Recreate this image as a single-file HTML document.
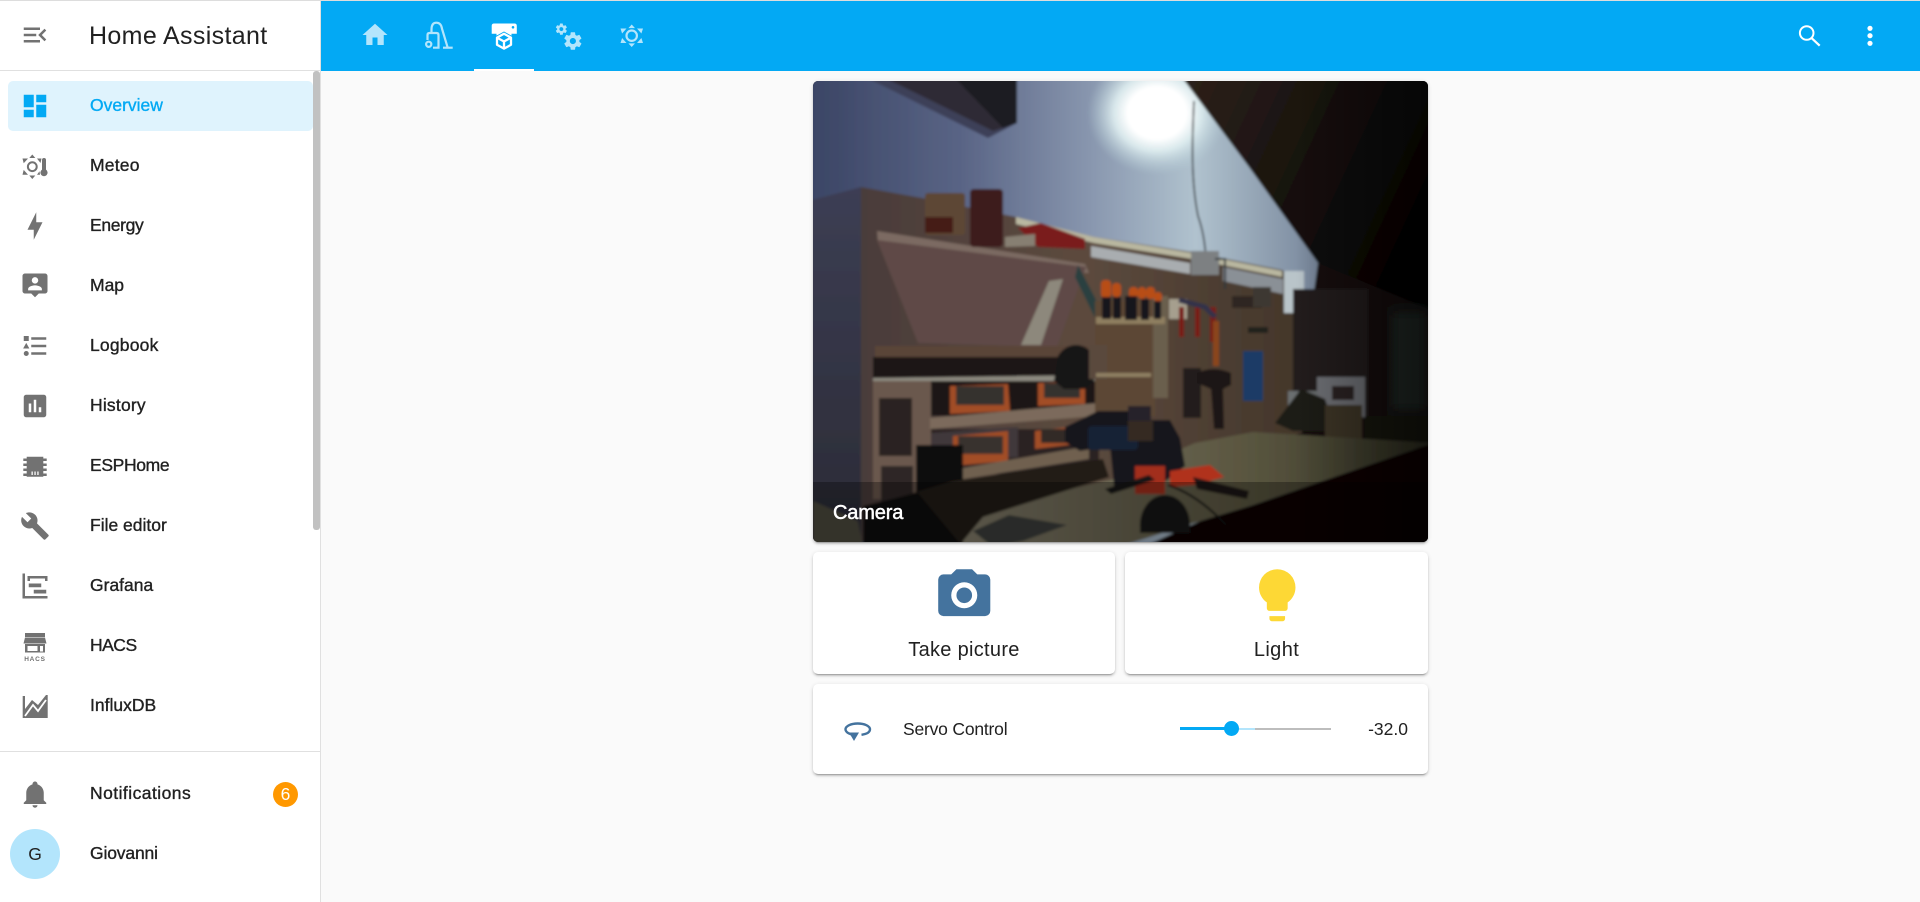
<!DOCTYPE html>
<html><head><meta charset="utf-8"><title>Home Assistant</title>
<style>
*{box-sizing:border-box}
html,body{margin:0;padding:0;width:1920px;height:902px;overflow:hidden;background:#fafafa;font-family:"Liberation Sans",Arial,sans-serif;color:#212121}
.abs,svg.i,.t{position:absolute}
svg.i{width:30px;height:30px;fill:#727272;left:20px}
.t{left:90px;font-size:17.5px;line-height:24px;height:24px;-webkit-text-stroke:.35px currentColor;white-space:nowrap}
.card{position:absolute;background:#fff;border-radius:5px;box-shadow:0 2px 2px rgba(0,0,0,.14),0 1px 5px rgba(0,0,0,.12),0 3px 1px -2px rgba(0,0,0,.2)}
.top svg{position:absolute}
</style></head><body>
<div class="abs" style="left:0;top:0;width:1920px;height:1px;background:#ddd;z-index:5"></div>
<div class="abs" style="left:321px;top:1px;width:1599px;height:70px;background:#03a9f4"></div>

<!-- sidebar -->
<div class="abs" style="left:0;top:0;width:321px;height:902px;background:#fff;border-right:1px solid #e0e0e0"></div>
<div class="abs" style="left:0;top:70px;width:320px;height:1px;background:#e0e0e0"></div>
<div class="abs" style="left:0;top:751px;width:320px;height:1px;background:#e0e0e0"></div>
<div class="abs" style="left:313px;top:71px;width:7px;height:459px;background:#c1c1c1;border-radius:3px"></div>
<div class="abs" style="left:8px;top:81px;width:305px;height:50px;border-radius:5px;background:#dff3fd"></div>

<svg class="i" style="top:19.5px" viewBox="0 0 24 24"><path d="M21,15.61L19.59,17L14.58,12L19.59,7L21,8.39L17.44,12L21,15.61M3,6H16V8H3V6M3,13V11H13V13H3M3,18V16H16V18H3Z"/></svg>
<div class="abs" style="left:89px;top:20px;font-size:25px;line-height:32px;color:#212121;white-space:nowrap;letter-spacing:.35px">Home Assistant</div>

<svg class="i" style="top:91px;fill:#03a9f4" viewBox="0 0 24 24"><path d="M13,3V9H21V3M13,21H21V11H13M3,21H11V15H3M3,13H11V3H3V13Z"/></svg>
<div class="t" style="top:93px;color:#03a9f4">Overview</div>

<svg class="i" style="top:151px" viewBox="0 0 30 30"><circle cx="12.3" cy="15.700" r="4.400" fill="none" stroke="#727272" stroke-width="2"/><path d="M12.300 3.500l3 3.500h-6zM12.300 28l-3-3.500h6zM2.500 7.500h5.500l-4.300 4.800zM21.500 7.500h-4.500l3.500 4.500zM2.500 23.700h5.500l-4.300-4.800zM20 23.700h-3l2.500-3.500z"/><path d="M22 9a2 2 0 0 1 4 0v9.600a3.600 3.600 0 1 1-4 0z"/></svg>
<div class="t" style="top:153px;letter-spacing:.2px">Meteo</div>

<svg class="i" style="top:211px" viewBox="0 0 24 24"><path d="M11 15H6L13 1V9H18L11 23V15Z"/></svg>
<div class="t" style="top:213px;letter-spacing:-.35px">Energy</div>

<svg class="i" style="top:271px" viewBox="0 0 24 24"><path fill-rule="evenodd" d="M20 2H4C2.900 2 2 2.900 2 4V16C2 17.100 2.900 18 4 18H9L12 21L15 18H20C21.100 18 22 17.100 22 16V4C22 2.900 21.100 2 20 2ZM12 4.900A2.600 2.600 0 1 1 12 10.100A2.600 2.600 0 1 1 12 4.900ZM17.500 15.500H6.500V14.300C6.500 12.500 10 11.500 12 11.500C14 11.500 17.500 12.500 17.500 14.300Z"/></svg>
<div class="t" style="top:273px">Map</div>

<svg class="i" style="top:331px" viewBox="0 0 24 24"><path d="M5,9.5L7.5,14H2.5L5,9.5M3,4H7V8H3V4M5,20A2,2 0 0,0 7,18A2,2 0 0,0 5,16A2,2 0 0,0 3,18A2,2 0 0,0 5,20M9,5V7H21V5H9M9,19H21V17H9V19M9,13H21V11H9V13Z"/></svg>
<div class="t" style="top:333px;letter-spacing:.2px">Logbook</div>

<svg class="i" style="top:391px" viewBox="0 0 24 24"><path fill-rule="evenodd" d="M9 17H7V10H9V17M13 17H11V7H13V17M17 17H15V13H17V17M19 3H5C3.9 3 3 3.9 3 5V19C3 20.1 3.9 21 5 21H19C20.1 21 21 20.1 21 19V5C21 3.9 20.1 3 19 3Z"/></svg>
<div class="t" style="top:393px;letter-spacing:.2px">History</div>

<svg class="i" style="top:451px" viewBox="0 0 30 30"><path fill-rule="evenodd" d="M6.700 5.700h16.600v20h-16.600zM11.500 20.500h1.300v3.500h-1.300zM14.400 20.500h1.300v3.500h-1.300zM17.300 20.500h1.300v3.500h-1.300z"/><path d="M3.300 7.500h4v2.500h-4zM3.300 12.500h4v2.500h-4zM3.300 17.500h4v2.500h-4zM3.300 22.500h4v2.500h-4zM22.700 7.500h4v2.500h-4zM22.700 12.500h4v2.500h-4zM22.700 17.500h4v2.500h-4zM22.700 22.500h4v2.500h-4z"/></svg>
<div class="t" style="top:453px;letter-spacing:-.35px">ESPHome</div>

<svg class="i" style="top:511px" viewBox="0 0 24 24"><path d="M22.7,19L13.6,9.9C14.5,7.6 14,4.9 12.1,3C10.1,1 7.1,0.6 4.7,1.7L9,6L6,9L1.6,4.7C0.4,7.1 0.9,10.1 2.9,12.1C4.8,14 7.5,14.5 9.8,13.6L18.9,22.7C19.3,23.1 19.9,23.1 20.3,22.7L22.6,20.4C23.1,20 23.1,19.3 22.7,19Z"/></svg>
<div class="t" style="top:513px;letter-spacing:0">File editor</div>

<svg class="i" style="top:571px" viewBox="0 0 24 24"><path d="M2,2H4V20H22V22H2V2M7,10H17V13H7V10M11,15H21V18H11V15M6,4H22V8H20V6H8V8H6V4Z"/></svg>
<div class="t" style="top:573px">Grafana</div>

<svg class="i" style="top:631px;height:34px" viewBox="0 0 30 34"><path fill-rule="evenodd" d="M5 2h20v4H5zM5 6.500h20l1.500 6H3.500zM5 13h20v8.500H5zM7.500 15v5h10v-5zM20 15v5.500h3V15z"/><text x="15" y="30" text-anchor="middle" font-family="Liberation Sans" font-size="6.500" font-weight="700" letter-spacing=".8" fill="#727272">HACS</text></svg>
<div class="t" style="top:633px;letter-spacing:-.5px">HACS</div>

<svg class="i" style="top:691px" viewBox="0 0 30 30"><path d="M2.700 5H5V18L12 9l6 5L26 4h1.700V27H2.700z"/><path d="M5 25L13 14l5 6L26 9" fill="none" stroke="#fff" stroke-width="1.800"/></svg>
<div class="t" style="top:693px">InfluxDB</div>

<svg class="i" style="top:779px" viewBox="0 0 24 24"><path d="M21,19V20H3V19L5,17V11C5,7.9 7.03,5.17 10,4.29C10,4.19 10,4.1 10,4A2,2 0 0,1 12,2A2,2 0 0,1 14,4C14,4.1 14,4.19 14,4.29C16.97,5.17 19,7.9 19,11V17L21,19M14,21A2,2 0 0,1 12,23A2,2 0 0,1 10,21"/></svg>
<div class="t" style="top:781px;letter-spacing:.45px">Notifications</div>
<div class="abs" style="left:273px;top:782px;width:25px;height:25px;border-radius:50%;background:#ff9800;color:#fff;font-size:17.5px;line-height:25px;text-align:center">6</div>

<div class="abs" style="left:10px;top:829px;width:50px;height:50px;border-radius:50%;background:#b3e5fc;color:#212121;font-size:17.5px;line-height:50px;text-align:center">G</div>
<div class="t" style="top:841px;letter-spacing:-.15px">Giovanni</div>

<!-- top bar -->
<div class="top">
<svg style="left:360px;top:20px;width:30px;height:30px;fill:#b3e5fc" viewBox="0 0 24 24"><path d="M10,20V14H14V20H19V12H22L12,3L2,12H5V20H10Z"/></svg>
<svg style="left:420px;top:15px;width:40px;height:40px;fill:none;stroke:#b3e5fc;stroke-width:2.200" viewBox="420 15 40 40"><circle cx="428.700" cy="44.300" r="2.600"/><path d="M427.500 40v-5q0-2 2-2h7q2 0 2 2v12.700h-5.500"/><path d="M431.500 33v-3.500q0-6.800 4.800-6.800t5.700 6l5.700 19"/><path d="M443 47.700h9.700"/></svg>
<svg style="left:485px;top:15px;width:40px;height:40px" viewBox="485 15 40 40"><path fill="#fff" fill-rule="evenodd" d="M494 23.500h20.500q2.300 0 2.300 2.300v8h-5.300v5h-15v-5h-4.800v-8q0-2.300 2.300-2.300zM513 26a1.300 1.300 0 1 0 .01 0z"/><path fill="#03a9f4" d="M504 31.500l9.500 5.200v9l-9.500 5.300-9.500-5.300v-9z"/><path fill="none" stroke="#fff" stroke-width="2.300" stroke-linejoin="round" d="M504 33.800l7 3.800v7.200l-7 3.800-7-3.800v-7.200zM497 37.600l7 3.900 7-3.900M504 41.500v7"/></svg>
<svg style="left:553px;top:21px;width:30px;height:30px;fill:#b3e5fc" viewBox="0 0 24 24"><path d="M15.9,18.45C17.25,18.45 18.35,17.35 18.35,16C18.35,14.65 17.25,13.55 15.9,13.55C14.54,13.55 13.45,14.65 13.45,16C13.45,17.35 14.54,18.45 15.9,18.45M21.1,16.68L22.58,17.84C22.71,17.95 22.75,18.13 22.66,18.29L21.26,20.71C21.17,20.86 21,20.92 20.83,20.86L19.09,20.16C18.73,20.44 18.34,20.67 17.92,20.85L17.65,22.7C17.62,22.87 17.47,23 17.3,23H14.5C14.32,23 14.18,22.87 14.15,22.7L13.89,20.85C13.46,20.67 13.07,20.44 12.71,20.16L10.96,20.86C10.81,20.92 10.62,20.86 10.54,20.71L9.14,18.29C9.05,18.13 9.09,17.95 9.22,17.84L10.7,16.68L10.65,16L10.7,15.31L9.22,14.16C9.09,14.05 9.05,13.86 9.14,13.71L10.54,11.29C10.62,11.13 10.81,11.07 10.96,11.13L12.71,11.84C13.07,11.56 13.46,11.32 13.89,11.15L14.15,9.29C14.18,9.13 14.32,9 14.5,9H17.3C17.47,9 17.62,9.13 17.65,9.29L17.92,11.15C18.34,11.32 18.73,11.56 19.09,11.84L20.83,11.13C21,11.07 21.17,11.13 21.26,11.29L22.66,13.71C22.75,13.86 22.71,14.05 22.58,14.16L21.1,15.31L21.15,16L21.1,16.68M6.69,8.07C7.56,8.07 8.26,7.37 8.26,6.5C8.26,5.63 7.56,4.92 6.69,4.92A1.58,1.58 0 0,0 5.11,6.5C5.11,7.37 5.82,8.07 6.69,8.07M10.03,6.94L11,7.68C11.07,7.75 11.09,7.87 11.03,7.97L10.13,9.53C10.08,9.63 9.96,9.67 9.86,9.63L8.74,9.18L8,9.62L7.81,10.81C7.79,10.92 7.7,11 7.59,11H5.79C5.67,11 5.58,10.92 5.56,10.81L5.4,9.62L4.64,9.18L3.5,9.63C3.41,9.67 3.3,9.63 3.24,9.53L2.34,7.97C2.28,7.87 2.31,7.75 2.39,7.68L3.34,6.94L3.31,6.5L3.34,6.06L2.39,5.32C2.31,5.25 2.28,5.13 2.34,5.03L3.24,3.47C3.3,3.37 3.41,3.33 3.5,3.37L4.63,3.82L5.4,3.38L5.56,2.19C5.58,2.08 5.67,2 5.79,2H7.59C7.7,2 7.79,2.08 7.81,2.19L8,3.38L8.74,3.82L9.86,3.37C9.96,3.33 10.08,3.37 10.13,3.47L11.03,5.03C11.09,5.13 11.07,5.25 11,5.32L10.03,6.06L10.05,6.5L10.03,6.94Z"/></svg>
<svg style="left:617px;top:21px;width:30px;height:30px;fill:#b3e5fc" viewBox="0 0 30 30"><circle cx="14.700" cy="14.700" r="5.200" fill="none" stroke="#b3e5fc" stroke-width="2.200"/><path d="M14.700 3.500l3.300 3.600h-6.600zM14.700 26l-3.300-3.600h6.600zM3.500 7.500h6l-4.400 5zM26 7.500h-6l4.400 5zM3.500 22h6l-4.400-5zM26 22h-6l4.400-5z"/></svg>
</div>
<div class="abs" style="left:474px;top:69px;width:60px;height:2px;background:#fff"></div>
<svg class="abs" style="left:1790px;top:15px;width:40px;height:40px;fill:none;stroke:#fff;stroke-width:2" viewBox="1790 15 40 40"><circle cx="1806.700" cy="33" r="6.800"/><path d="M1811.700 38.200l8 7.500" stroke-width="2.200"/></svg>
<svg class="abs" style="left:1860px;top:20px;width:20px;height:32px;fill:#fff" viewBox="1860 20 20 32"><circle cx="1870" cy="28.300" r="2.600"/><circle cx="1870" cy="35.700" r="2.600"/><circle cx="1870" cy="43.300" r="2.600"/></svg>

<!-- camera card -->
<div class="card" style="left:813px;top:81px;width:615px;height:461px;overflow:hidden;background:#000">
<svg width="615" height="461" viewBox="0 0 615 461" style="display:block">
<defs>
<linearGradient id="wall" x1="0" x2="1" y1="0" y2="0"><stop offset="0" stop-color="#3a4464"/><stop offset=".25" stop-color="#5a6586"/><stop offset=".45" stop-color="#8896ae"/><stop offset=".62" stop-color="#b0c2ce"/><stop offset=".8" stop-color="#7d8ca0"/><stop offset="1" stop-color="#3c4450"/></linearGradient>
<radialGradient id="glow" cx=".5" cy=".5" r=".5"><stop offset="0" stop-color="#fff"/><stop offset=".42" stop-color="#fff"/><stop offset=".62" stop-color="#dfeef0" stop-opacity=".9"/><stop offset="1" stop-color="#b8d0d8" stop-opacity="0"/></radialGradient>
<linearGradient id="ceil" x1="0" x2="1" y1="0" y2=".45"><stop offset="0" stop-color="#2e221b"/><stop offset=".45" stop-color="#1b1410"/><stop offset="1" stop-color="#050303"/></linearGradient>
<linearGradient id="wood" x1="0" x2="1" y1="0" y2="0"><stop offset="0" stop-color="#4a3c3a"/><stop offset=".5" stop-color="#5c4a3e"/><stop offset="1" stop-color="#43362a"/></linearGradient>
<linearGradient id="lw" x1="0" x2="0" y1="0" y2="1"><stop offset="0" stop-color="#3c3e54"/><stop offset="1" stop-color="#2a2a34"/></linearGradient>
<linearGradient id="bench" x1="0" x2="1" y1="0" y2="0"><stop offset="0" stop-color="#807a68"/><stop offset=".6" stop-color="#5a5640"/><stop offset="1" stop-color="#333324"/></linearGradient>
<linearGradient id="shade" x1="0" x2="1" y1="0" y2="0"><stop offset=".78" stop-color="#000" stop-opacity="0"/><stop offset="1" stop-color="#000" stop-opacity=".55"/></linearGradient>
<filter id="b" x="-5%" y="-5%" width="110%" height="110%"><feGaussianBlur stdDeviation="1.200"/></filter>
<filter id="b3"><feGaussianBlur stdDeviation="6"/></filter>
</defs>
<g filter="url(#b)">
<rect x="-5" y="-5" width="625" height="471" fill="url(#wall)"/>
<ellipse cx="344" cy="32" rx="70" ry="62" fill="url(#glow)"/>
<polygon points="50,-5 204,-5 204,42 175,57" fill="#3d4058"/>
<polygon points="68,-5 204,-5 204,42 180,50" fill="#2e2c36"/>
<polygon points="140,-5 204,-5 204,42 190,47" fill="#1d1a20"/>
<polygon points="-5,120 48,106 48,470 -5,470" fill="url(#lw)"/>
<!-- ceiling -->
<polygon points="368,-5 620,-5 620,240 505,182 436,86" fill="url(#ceil)"/>
<polygon points="505,182 620,230 620,370 480,360" fill="#141010"/>
<rect x="578" y="230" width="36" height="100" fill="#222a28" filter="url(#b3)"/>
<!-- wiring -->
<path d="M381 20C379 60 378 100 385 135Q394 160 393 195" fill="none" stroke="#1c1c22" stroke-width="1.500"/>
<!-- wall trim -->
<polygon points="48,106 109,117 203,136 281,156 379,171 469,189 489,202 489,352 300,402 48,461" fill="url(#wood)"/>
<polygon points="203,136 281,156 379,172 469,190 469,196 379,178 281,162 203,143" fill="#b9b7a0"/>
<polygon points="278,165 377,182 377,193 278,176" fill="#a9adb0"/>
<rect x="378" y="170" width="28" height="24" fill="#7d8082"/>
<polygon points="410,186 470,198 470,213 410,200" fill="#8a9096"/>
<rect x="471" y="190" width="20" height="42" fill="#b9c4c9"/>
<!-- shelf with items -->
<polygon points="64,150 272,183 276,192 230,190 65,162" fill="#7c6a62"/>
<polygon points="64,159 273,186 244,266 105,262" fill="#5e4a47"/>
<polygon points="250,198 228,264 208,264 236,200" fill="#8d887c"/>
<polygon points="265,184 294,240 286,245 262,196" fill="#2c4040"/>
<rect x="112" y="112" width="40" height="42" rx="3" fill="#5d4636"/>
<rect x="112" y="136" width="28" height="16" fill="#451a18"/>
<rect x="157" y="108" width="33" height="58" rx="4" fill="#3d1c1c"/>
<polygon points="205,147 228,142 272,158 272,168 225,166" fill="#7a1a1c"/>
<polygon points="192,156 222,153 222,165 192,166" fill="#877f72"/>
<!-- shelves low -->
<rect x="62" y="265" width="213" height="11" fill="#5a4438"/>
<polygon points="60,276 275,276 290,297 60,297" fill="#1f1716"/>
<polygon points="60,297 290,294 293,300 60,303" fill="#8d8a80"/>
<rect x="60" y="300" width="58" height="118" fill="#6a594e"/>
<rect x="66" y="317" width="33" height="58" fill="#2a2423"/>
<rect x="68" y="385" width="32" height="40" fill="#2d2625"/>
<rect x="118" y="300" width="167" height="35" fill="#1b1618"/>
<polygon points="137,305 195,303 197,330 137,333" fill="#a24e28"/>
<rect x="143" y="305" width="48" height="19" fill="#35302e"/>
<polygon points="225,302 272,300 272,323 225,325" fill="#a24e28"/>
<rect x="231" y="302" width="36" height="15" fill="#35302e"/>
<polygon points="117,337 285,322 285,335 117,348" fill="#7b6b5c"/>
<rect x="118" y="348" width="168" height="45" fill="#2a2224"/>
<polygon points="118,352 205,346 205,376 118,382" fill="#3f383a"/>
<polygon points="140,355 195,350 195,380 140,385" fill="#a24e28"/>
<rect x="145" y="355" width="45" height="18" fill="#38302e"/>
<polygon points="222,350 272,344 272,362 222,368" fill="#a24e28"/>
<rect x="228" y="348" width="38" height="14" fill="#332a28"/>
<polygon points="150,387 276,365 276,378 150,398" fill="#706050"/>
<rect x="103" y="364" width="47" height="100" fill="#0f0c0c"/>
<path d="M245 275a22 26 0 0 1 36 0v25l-10 8h-20l-10-8z" fill="#171414"/>
<rect x="282" y="220" width="60" height="115" fill="#5c4634"/>
<rect x="276" y="264" width="18" height="34" fill="#5a4a3c"/>
<rect x="340" y="215" width="15" height="102" fill="#6a5e4e"/>
<rect x="283" y="236" width="69" height="7" fill="#8f7f60"/>
<rect x="283" y="292" width="55" height="4" fill="#8f8064"/>
<!-- screwdrivers -->
<g fill="#b84e18"><rect x="288" y="199" width="10" height="18" rx="4"/><rect x="299" y="202" width="9" height="14" rx="4"/><rect x="316" y="206" width="9" height="12" rx="4"/><rect x="325" y="206" width="8" height="12" rx="4"/><rect x="333" y="206" width="9" height="12" rx="4"/><rect x="341" y="211" width="8" height="10" rx="4"/></g>
<g fill="#15141e"><rect x="289" y="216" width="9" height="22"/><rect x="300" y="216" width="8" height="22"/><rect x="312" y="215" width="12" height="24"/><rect x="328" y="218" width="8" height="21"/><rect x="341" y="220" width="7" height="18"/></g>
<rect x="356" y="218" width="18" height="20" fill="#a69f8e"/>
<!-- wall tools -->
<g fill="#781c18"><rect x="366" y="226" width="5" height="30"/><rect x="382" y="226" width="5" height="30"/><rect x="397" y="226" width="6" height="35"/></g>
<path d="M366 219l26 7 10 10" stroke="#32334a" stroke-width="5" fill="none"/>
<rect x="400" y="240" width="6" height="45" fill="#8b451c"/>
<rect x="370" y="287" width="18" height="50" fill="#201c1e"/>
<path d="M384 292q16-8 34 0v12l-8 4 1 40h-10l-3-40-14-6z" fill="#1c1716"/>
<rect x="430" y="270" width="20" height="50" fill="#1f3a66"/>
<path d="M402 178l10 0 0 30" stroke="#32383a" stroke-width="2" fill="none"/>
<path d="M419 215h30v12h-30z" fill="#2f2823"/>
<rect x="440" y="206" width="18" height="20" fill="#3d3830"/>
<rect x="435" y="246" width="20" height="6" fill="#24241e"/>
<!-- right -->
<rect x="480" y="208" width="75" height="130" fill="#241f1b"/>
<rect x="504" y="296" width="48" height="40" fill="#6e7074"/>
<rect x="519" y="305" width="22" height="14" fill="#2a2422"/>
<rect x="475" y="310" width="30" height="16" fill="#6a6e70"/>
<path d="M462 342l26-34 24 10 8 22v10h-40z" fill="#1c1a16"/>
<rect x="512" y="324" width="37" height="42" fill="#3e3428"/>
<rect x="552" y="335" width="63" height="28" fill="#191410"/>
<!-- bench -->
<polygon points="150,432 297,399 382,362 440,351 620,362 440,424 387,440 305,466 150,466" fill="url(#bench)"/>
<polygon points="620,362 440,424 387,440 330,466 620,466" fill="#070505"/>
<polygon points="0,420 45,440 50,466 0,466" fill="#4b4a3e"/>
<polygon points="160,450 196,434 254,444 210,460 180,466" fill="#3b3c3a"/>
<polygon points="140,400 290,378 296,396 170,436 145,466 60,466 60,424" fill="#241c18"/>
<polygon points="50,425 105,412 150,466 50,466" fill="#0c0a0a"/>
<!-- vise -->
<path d="M285 330h30l4 9h38l10 18 5 28-26 20h-45l-4-40-30 5-15-9 0-15z" fill="#17161c"/>
<rect x="275" y="345" width="50" height="24" rx="4" fill="#182436"/>
<rect x="315" y="325" width="23" height="18" fill="#262429"/>
<rect x="315" y="340" width="25" height="20" fill="#342a24"/>
<rect x="322" y="385" width="30" height="28" fill="#a22e1a"/>
<path d="M357 390l40-6 14 12-30 8-24 2z" fill="#b0321c"/>
<path d="M380 396l56 14-2 8-50-10z" fill="#1a1614"/>
<path d="M292 408l44-14 6 5-44 14z" fill="#141214"/>
<path d="M327 446a25 30 0 0 1 50 -4v10h-50z" fill="#131316"/>
<path d="M355 404q30 10 58 40" stroke="#0e0e0e" stroke-width="2" fill="none"/>
</g>
<rect x="-5" y="-5" width="625" height="471" fill="url(#shade)"/>
<rect x="0" y="401" width="615" height="60" fill="rgba(0,0,0,.3)"/>
</svg>
<div class="abs" style="left:20px;top:420px;color:#fff;font-size:20px;line-height:24px;-webkit-text-stroke:.5px #fff;white-space:nowrap;letter-spacing:-.15px">Camera</div>
</div>

<!-- buttons -->
<div class="card" style="left:813px;top:552px;width:302px;height:122px"></div>
<div class="card" style="left:1125px;top:552px;width:303px;height:122px"></div>
<svg class="abs" style="left:932.5px;top:564px;width:62.500px;height:62.500px;fill:#44739e" viewBox="0 0 24 24"><path fill-rule="evenodd" d="M4,4H7L9,2H15L17,4H20A2,2 0 0,1 22,6V18A2,2 0 0,1 20,20H4A2,2 0 0,1 2,18V6A2,2 0 0,1 4,4M12,7A5,5 0 0,0 7,12A5,5 0 0,0 12,17A5,5 0 0,0 17,12A5,5 0 0,0 12,7M12,9A3,3 0 0,1 15,12A3,3 0 0,1 12,15A3,3 0 0,1 9,12A3,3 0 0,1 12,9Z"/></svg>
<svg class="abs" style="left:1246px;top:564px;width:62.500px;height:62.500px;fill:#fdd835" viewBox="0 0 24 24"><path d="M12,2A7,7 0 0,0 5,9C5,11.38 6.19,13.47 8,14.74V17A1,1 0 0,0 9,18H15A1,1 0 0,0 16,17V14.74C17.81,13.47 19,11.38 19,9A7,7 0 0,0 12,2M9,21A1,1 0 0,0 10,22H14A1,1 0 0,0 15,21V20H9V21Z"/></svg>
<div class="abs" style="left:813px;top:636px;width:302px;text-align:center;font-size:20px;line-height:28px;color:#212121;letter-spacing:.3px">Take picture</div>
<div class="abs" style="left:1125px;top:636px;width:303px;text-align:center;font-size:20px;line-height:28px;color:#212121;letter-spacing:.4px">Light</div>

<!-- servo -->
<div class="card" style="left:813px;top:684px;width:615px;height:90px"></div>
<svg class="abs" style="left:843px;top:715px;width:30px;height:30px" viewBox="0 0 30 30"><path fill="none" stroke="#44739e" stroke-width="2.400" d="M18.500 19.800C24 19 27 17 27 14.300C27 11 21.500 8.500 14.700 8.500C8 8.500 2.500 11 2.500 14.300C2.500 17 6 19.300 11 19.800"/><path fill="#44739e" d="M6 17.500H16L11 26z"/></svg>
<div class="abs" style="left:903px;top:717px;font-size:17.5px;line-height:24px;color:#212121;white-space:nowrap;letter-spacing:-.2px">Servo Control</div>
<div class="abs" style="left:1300px;top:717px;width:108px;text-align:right;font-size:17.5px;line-height:24px;color:#212121">-32.0</div>
<div class="abs" style="left:1180px;top:728px;width:151px;height:2px;background:#bdbdbd"></div>
<div class="abs" style="left:1231px;top:728px;width:24px;height:2px;background:#b3e5fc"></div>
<div class="abs" style="left:1180px;top:727px;width:51px;height:3px;background:#03a9f4"></div>
<div class="abs" style="left:1224px;top:721px;width:15px;height:15px;border-radius:50%;background:#03a9f4"></div>
</body></html>
